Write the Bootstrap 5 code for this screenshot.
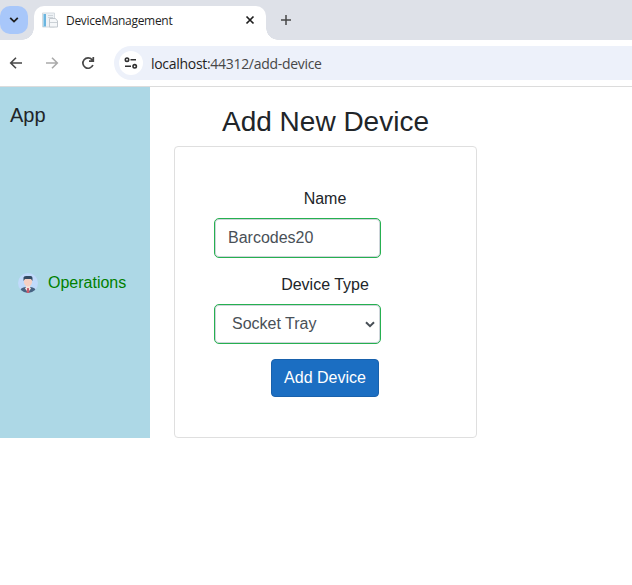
<!DOCTYPE html>
<html lang="en">
<head>
<meta charset="utf-8">
<title>DeviceManagement</title>
<link href="https://cdn.jsdelivr.net/npm/bootstrap@5.3.0/dist/css/bootstrap.min.css" rel="stylesheet">
<style>
body{font-family:"Liberation Sans",Arial,sans-serif;color:#212529;height:585px;overflow:hidden}
svg{display:block;flex:none}
.tabstrip{background:#dee1e8;height:40px}
.tab-search{width:28px;height:28px;background:#a8c7fa;border-radius:10px;margin-top:6px}
.page-tab{width:232px;height:34px;margin:6px 0 0 6px;border-radius:10px 10px 0 0;padding-left:8px;padding-right:10px;font:12px "Open Sans",sans-serif;color:#1f1f1f}
.page-tab::before,.page-tab::after{content:"";position:absolute;bottom:0;width:12px;height:12px}
.page-tab::before{left:-12px;background:radial-gradient(circle at 0 0,transparent 11.5px,#fff 12px)}
.page-tab::after{right:-12px;background:radial-gradient(circle at 100% 0,transparent 11.5px,#fff 12px)}
.tab-title{letter-spacing:-.3px;margin-left:7px;line-height:16px;margin-bottom:5px}
.favicon{margin-bottom:5px}
.tab-close{margin-bottom:6px}
.new-tab{margin-left:15px}
.toolbar{height:47px;border-bottom:1px solid #dcdcdc;padding-left:8px;gap:20px}
.omnibox{height:34px;background:#edf1fa;border-radius:17px 0 0 17px;margin-left:-2px;padding-left:5px}
.site-info{width:24px;height:24px}
.url{font:14px "Open Sans",sans-serif;color:#1f1f1f;margin-left:8px;white-space:nowrap;letter-spacing:-.3px}
.url-path{color:#474747}
.sidebar{width:150px;height:351px;background:#add8e6}
.brand{font-size:20px;line-height:24px;padding:16px 10px 0}
.menu-link{color:green;margin-top:144px;padding-left:18px;gap:10px;line-height:24px}
.content{width:303px;margin-left:24px}
.content h1{font-size:28px;line-height:33px;padding-top:18px;margin-bottom:8px}
.device-card{height:292px;border:1px solid #dfdfdf;border-radius:4px;padding:40px 39px 0}
.device-card label{line-height:24px;margin-bottom:7px;width:222px}
.device-card .type-label{margin:15px 0 7px}
.field{width:167px;height:40px;border:1px solid #26b050;outline:0;border-radius:5px;color:#495057;background:#fff;box-shadow:inset 0 0 0 1px #ced4da;padding:0 13px 1px;font-size:16px}
.field-select{padding:0 2px 0 13px;border-right-width:1px;appearance:none;background:#fff url("data:image/svg+xml,%3Csvg xmlns='http://www.w3.org/2000/svg' viewBox='0 0 10 7'%3E%3Cpath d='M1 1.200 5 5.200 9 1.200' fill='none' stroke='%23495057' stroke-width='2'/%3E%3C/svg%3E") no-repeat right 5px center/10px 7px;padding-left:17px}
.add-btn{width:108px;height:38px;background:#1b6ec2;border:1px solid #1861ac;color:#fff;border-radius:4px;padding:0;margin:15px 0 0 57px}
</style>
<script src="https://cdn.jsdelivr.net/npm/bootstrap@5.3.0/dist/js/bootstrap.bundle.min.js"></script>
</head>
<body class="bg-white">
<header>
<div class="tabstrip d-flex">
  <div class="tab-search d-flex align-items-center justify-content-center"><svg width="10" height="8" viewBox="0 0 10 8" fill="none" stroke="#1f1f1f" stroke-width="1.8"><path d="M1.2 1.8 5 5.6 8.8 1.8"/></svg></div>
  <div class="page-tab position-relative bg-white d-flex align-items-center">
    <svg class="favicon" width="17" height="17" viewBox="0 0 17 17"><path d="M.5 1h12v14H.5z" fill="#eef2f6" stroke="#d5dbe0"/><path d="M1 2h3v12.500H1z" fill="#6bb5df"/><path d="M1 2h1v12.500H1z" fill="#a8d6ee"/><path d="M6 3.500h5M6 5.500h5" stroke="#cfd5da"/><path d="M7.500 9V6.500h6L15.500 9v6h-8z" fill="#f5f7f9" stroke="#c2c8ce"/><path d="M8 10.500h7" stroke="#cbd1d6"/></svg>
    <span class="tab-title">DeviceManagement</span>
    <svg class="tab-close ms-auto" width="12" height="12" viewBox="0 0 12 12" stroke="#1f1f1f" stroke-width="1.7"><path d="m2.500 2.500 7 7m0-7-7 7"/></svg>
  </div>
  <svg class="new-tab align-self-center" width="10" height="10" viewBox="0 0 10 10" stroke="#474747" stroke-width="1.5"><path d="M0 5h10M5 0v10"/></svg>
</div>
<div class="toolbar d-flex align-items-center">
  <svg width="16" height="16" viewBox="0 0 16 16" fill="none" stroke="#474747" stroke-width="1.6"><path d="M14 8H3M8 2.700 2.700 8 8 13.300"/></svg>
  <svg width="16" height="16" viewBox="0 0 16 16" fill="none" stroke="#aaa" stroke-width="1.6"><path d="M2 8h11M8 2.700 13.300 8 8 13.300"/></svg>
  <svg width="16" height="16" viewBox="0 0 16 16" fill="none" stroke="#474747" stroke-width="1.7"><path d="M12.900 10A5.200 5.200 0 1 1 12 4.600L13.300 6M13.300 2v4.200H9"/></svg>
  <div class="omnibox flex-grow-1 d-flex align-items-center">
    <div class="site-info bg-white rounded-circle d-flex align-items-center justify-content-center"><svg width="14" height="12" viewBox="0 0 14 12" fill="none" stroke="#303030" stroke-width="1.6"><circle cx="3" cy="2.700" r="1.700"/><path d="M6.500 2.700H12M1 9.300h6"/><circle cx="10.700" cy="9.300" r="1.700"/></svg></div>
    <div class="url">localhost<span class="url-path">:44312/add-device</span></div>
  </div>
</div>
</header>
<div class="d-flex align-items-start">
  <nav class="sidebar">
    <div class="brand">App</div>
    <a class="menu-link d-flex align-items-center text-decoration-none" href="#">
      <svg width="20" height="20" viewBox="0 0 20 20"><defs><clipPath id="avatar"><circle cx="10" cy="10" r="10"/></clipPath></defs><g clip-path="url(#avatar)"><path fill="#c0dafb" d="M0 0h20v20H0z"/><path d="M2.500 20v-3q0-2 5-3h5q5 1 5 3v3z" fill="#466382"/><path d="M8 11h4v3l1 1.500-3 4-3-4 1-1.500z" fill="#f4e2dc"/><path d="m9.200 15h1.600l.7 5h-3z" fill="#ca5b6a"/><path d="M6 6h8v3.500q-.5 3.500-4 4-3.500-.5-4-4z" fill="#f5d0c3"/><path d="M5.500 8V4.500Q5.500 3 8 3h4.500q2 0 2 2v3L13 6H7z" fill="#344a62"/></g></svg>
      <span>Operations</span>
    </a>
  </nav>
  <main class="content">
    <h1 class="text-center fw-normal">Add New Device</h1>
    <div class="device-card">
      <form>
        <label class="d-block text-center" for="name">Name</label>
        <input id="name" class="field d-block" value="Barcodes20">
        <label class="type-label d-block text-center" for="type">Device Type</label>
        <select id="type" class="field field-select d-block"><option>Socket Tray</option></select>
        <button type="button" class="add-btn btn">Add Device</button>
      </form>
    </div>
  </main>
</div>
</body>
</html>
